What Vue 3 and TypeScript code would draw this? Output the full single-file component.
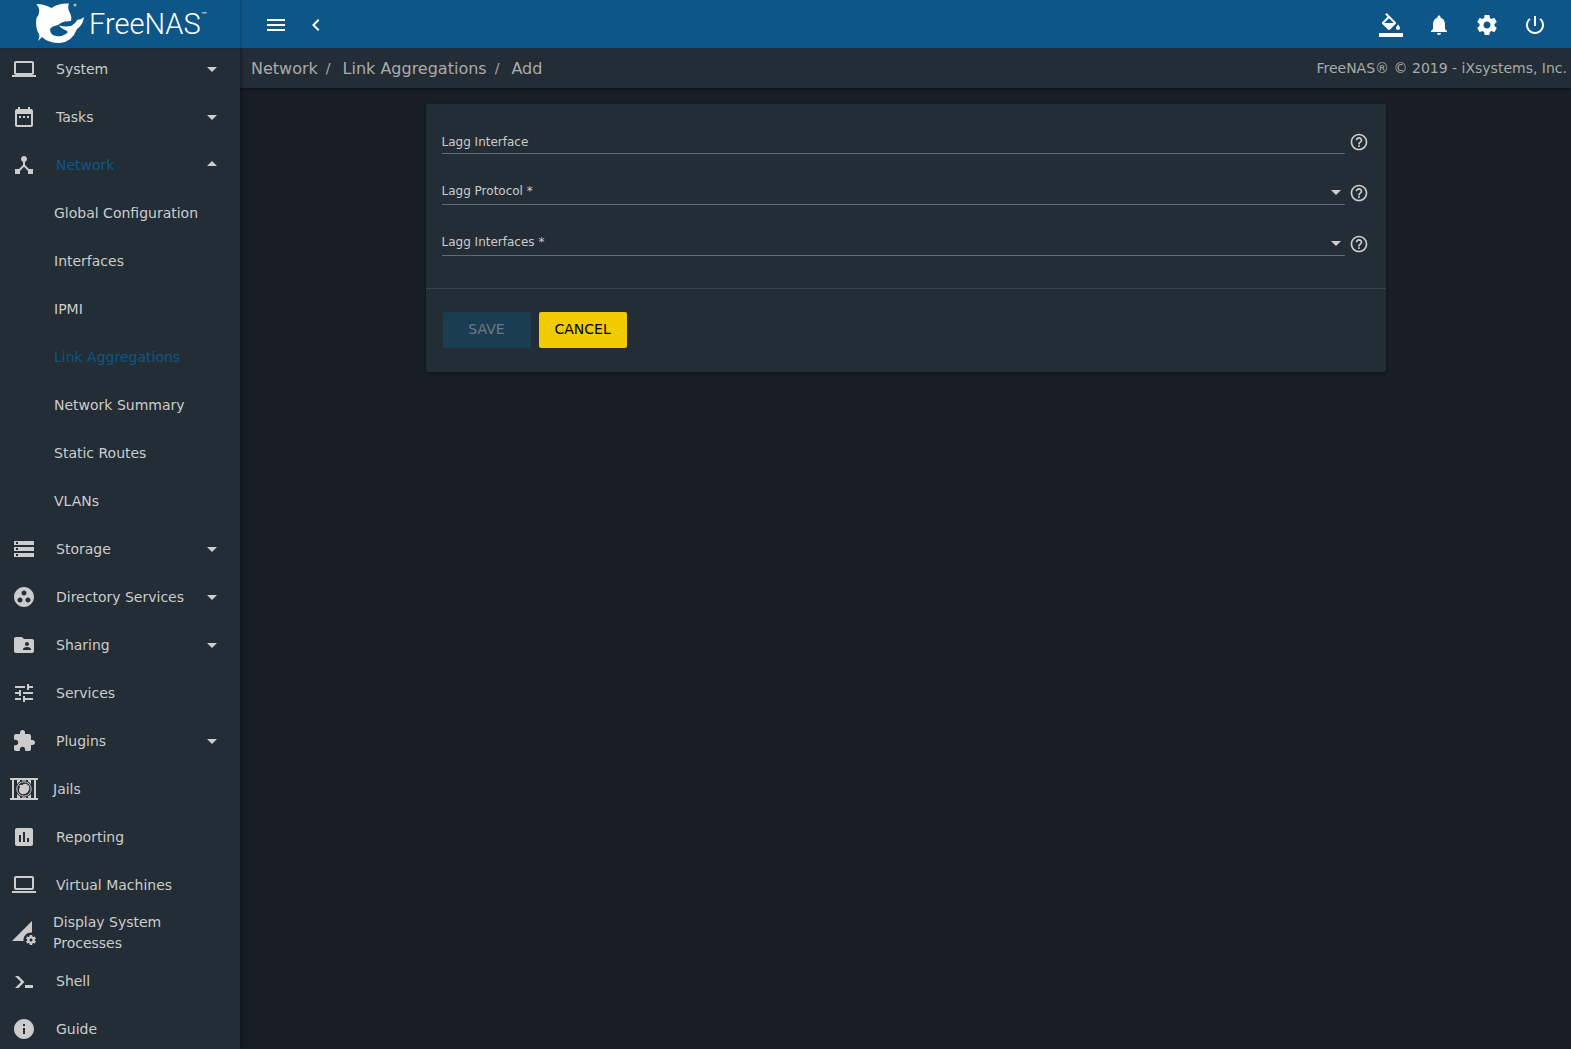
<script setup lang="ts">
interface NavItem {
  label: string
  icon: string
  arrow?: boolean
  open?: boolean
  custom?: boolean
}

const icons: Record<string, string> = {
  computer: 'M20 18c1.1 0 1.99-.9 1.99-2L22 6c0-1.1-.9-2-2-2H4c-1.1 0-2 .9-2 2v10c0 1.1.9 2 2 2H0v2h24v-2h-4zM4 6h16v10H4V6z',
  laptop: 'M20 17c1.1 0 2-.9 2-2V5c0-1.1-.9-2-2-2H4c-1.1 0-2 .9-2 2v10c0 1.1.9 2 2 2zM4 5h16v10H4zM0 18h24v2H0z',
  date: 'M9 11H7v2h2v-2zm4 0h-2v2h2v-2zm4 0h-2v2h2v-2zm2-7h-1V2h-2v2H8V2H6v2H5c-1.11 0-1.99.9-1.99 2L3 20c0 1.1.89 2 2 2h14c1.1 0 2-.9 2-2V6c0-1.1-.9-2-2-2zm0 16H5V9h14v11z',
  hub: 'M17 16l-4-4V8.82C14.16 8.4 15 7.3 15 6c0-1.66-1.34-3-3-3S9 4.34 9 6c0 1.3.84 2.4 2 2.82V12l-4 4H3v5h5v-3.05l4-4.2 4 4.2V21h5v-5h-4z',
  storage: 'M2 20h20v-4H2v4zm2-3h2v2H4v-2zM2 4v4h20V4H2zm4 3H4V5h2v2zm-4 7h20v-4H2v4zm2-3h2v2H4v-2z',
  group: 'M12 2C6.48 2 2 6.48 2 12s4.48 10 10 10 10-4.48 10-10S17.52 2 12 2zM8 17.5c-1.38 0-2.5-1.12-2.5-2.5s1.12-2.5 2.5-2.5 2.5 1.12 2.5 2.5-1.12 2.5-2.5 2.5zM9.5 8c0-1.38 1.12-2.5 2.5-2.5s2.5 1.12 2.5 2.5-1.12 2.5-2.5 2.5S9.5 9.38 9.5 8zm6.5 9.5c-1.38 0-2.5-1.12-2.5-2.5s1.12-2.5 2.5-2.5 2.5 1.12 2.5 2.5-1.12 2.5-2.5 2.5z',
  share: 'M20 6h-8l-2-2H4c-1.1 0-1.99.9-1.99 2L2 18c0 1.1.9 2 2 2h16c1.1 0 2-.9 2-2V8c0-1.1-.9-2-2-2zm-5 3c1.1 0 2 .9 2 2s-.9 2-2 2-2-.9-2-2 .9-2 2-2zm4 8h-8v-1c0-1.33 2.67-2 4-2s4 .67 4 2v1z',
  tune: 'M3 17v2h6v-2H3zM3 5v2h10V5H3zm10 16v-2h8v-2h-8v-2h-2v6h2zM7 9v2H3v2h4v2h2V9H7zm14 4v-2H11v2h10zm-6-4h2V7h4V5h-4V3h-2v6z',
  extension: 'M20.5 11H19V7c0-1.1-.9-2-2-2h-4V3.5C13 2.12 11.88 1 10.5 1S8 2.12 8 3.5V5H4c-1.1 0-1.99.9-1.99 2v3.8H3.5c1.49 0 2.7 1.21 2.7 2.7s-1.21 2.7-2.7 2.7H2V20c0 1.1.9 2 2 2h3.8v-1.5c0-1.49 1.21-2.7 2.7-2.7 1.49 0 2.7 1.21 2.7 2.7V22H17c1.1 0 2-.9 2-2v-4h1.5c1.38 0 2.5-1.12 2.5-2.5S21.88 11 20.5 11z',
  report: 'M19 3H5c-1.1 0-2 .9-2 2v14c0 1.1.9 2 2 2h14c1.1 0 2-.9 2-2V5c0-1.1-.9-2-2-2zM9 17H7v-7h2v7zm4 0h-2V7h2v10zm4 0h-2v-4h2v4z',
  process: 'M18.99 11.5c.34 0 .67.03 1 .07L20 0 0 20h11.56c-.04-.33-.07-.66-.07-1 0-4.14 3.36-7.5 7.5-7.5zm3.71 7.99c.02-.16.04-.32.04-.49 0-.17-.01-.33-.04-.49l1.06-.83c.09-.08.12-.21.06-.32l-1-1.73c-.06-.11-.19-.15-.31-.11l-1.24.5c-.26-.2-.54-.37-.85-.49l-.19-1.32c-.01-.12-.12-.21-.24-.21h-2c-.12 0-.23.09-.25.21l-.19 1.32c-.3.13-.59.29-.85.49l-1.24-.5c-.11-.04-.24 0-.31.11l-1 1.73c-.06.11-.04.24.06.32l1.06.83c-.02.16-.03.32-.03.49 0 .17.01.33.03.49l-1.06.83c-.09.08-.12.21-.06.32l1 1.73c.06.11.19.15.31.11l1.24-.5c.26.2.54.37.85.49l.19 1.32c.02.12.12.21.25.21h2c.12 0 .23-.09.25-.21l.19-1.32c.3-.13.59-.29.84-.49l1.25.5c.11.04.24 0 .31-.11l1-1.73c.06-.11.03-.24-.06-.32l-1.07-.83zm-3.71 1.01c-.83 0-1.5-.67-1.5-1.5s.67-1.5 1.5-1.5 1.5.67 1.5 1.5-.67 1.5-1.5 1.5z',
  shell: 'M3 7h3.500l6 6-6 6H3l6-6zM13 16h8v3h-8z',
  info: 'M12 2C6.48 2 2 6.48 2 12s4.48 10 10 10 10-4.48 10-10S17.52 2 12 2zm1 15h-2v-6h2v6zm0-8h-2V7h2v2z',
  menu: 'M3 18h18v-2H3v2zm0-5h18v-2H3v2zm0-7v2h18V6H3z',
  chevron: 'M15.41 7.41L14 6l-6 6 6 6 1.41-1.41L10.83 12z',
  fill: 'M16.56 8.94L7.62 0 6.21 1.41l2.38 2.38-5.15 5.15c-.59.59-.59 1.54 0 2.12l5.5 5.5c.29.29.68.44 1.06.44s.77-.15 1.06-.44l5.5-5.5c.59-.58.59-1.53 0-2.12zM5.21 10L10 5.21 14.79 10H5.21zM19 11.5s-2 2.17-2 3.5c0 1.1.9 2 2 2s2-.9 2-2c0-1.33-2-3.5-2-3.5zM0 20h24v4H0v-4z',
  bell: 'M12 22c1.1 0 2-.9 2-2h-4c0 1.1.89 2 2 2zm6-6v-5c0-3.07-1.64-5.64-4.5-6.32V4c0-.83-.67-1.5-1.5-1.5s-1.5.67-1.5 1.5v.68C7.63 5.36 6 7.92 6 11v5l-2 2v1h16v-1l-2-2z',
  settings: 'M19.43 12.98c.04-.32.07-.64.07-.98s-.03-.66-.07-.98l2.11-1.65c.19-.15.24-.42.12-.64l-2-3.46c-.12-.22-.39-.3-.61-.22l-2.49 1c-.52-.4-1.08-.73-1.69-.98l-.38-2.65C14.46 2.18 14.25 2 14 2h-4c-.25 0-.46.18-.49.42l-.38 2.65c-.61.25-1.17.59-1.69.98l-2.49-1c-.23-.09-.49 0-.61.22l-2 3.46c-.13.22-.07.49.12.64l2.11 1.65c-.04.32-.07.65-.07.98s.03.66.07.98l-2.11 1.65c-.19.15-.24.42-.12.64l2 3.46c.12.22.39.3.61.22l2.49-1c.52.4 1.08.73 1.69.98l.38 2.65c.03.24.24.42.49.42h4c.25 0 .46-.18.49-.42l.38-2.65c.61-.25 1.17-.59 1.69-.98l2.49 1c.23.09.49 0 .61-.22l2-3.46c.12-.22.07-.49-.12-.64l-2.11-1.65zM12 15.5c-1.93 0-3.5-1.57-3.5-3.5s1.57-3.5 3.5-3.5 3.5 1.57 3.5 3.5-1.57 3.5-3.5 3.5z',
  power: 'M13 3h-2v10h2V3zm4.83 2.17l-1.42 1.42C17.99 7.86 19 9.81 19 12c0 3.87-3.13 7-7 7s-7-3.13-7-7c0-2.19 1.01-4.14 2.58-5.42L6.17 5.17C4.23 6.82 3 9.26 3 12c0 4.97 4.03 9 9 9s9-4.03 9-9c0-2.74-1.23-5.18-3.17-6.83z',
  help: 'M11 18h2v-2h-2v2zm1-16C6.48 2 2 6.48 2 12s4.48 10 10 10 10-4.48 10-10S17.52 2 12 2zm0 18c-4.41 0-8-3.59-8-8s3.59-8 8-8 8 3.59 8 8-3.59 8-8 8zm0-14c-2.21 0-4 1.79-4 4h2c0-1.1.9-2 2-2s2 .9 2 2c0 2-3 1.75-3 5h2c0-2.25 3-2.5 3-5 0-2.21-1.79-4-4-4z',
  down: 'M7 10l5 5 5-5z',
  up: 'M7 13l5-5 5 5z',
}

const nav: NavItem[] = [
  { label: 'System', icon: 'computer', arrow: true },
  { label: 'Tasks', icon: 'date', arrow: true },
  { label: 'Network', icon: 'hub', arrow: true, open: true },
  { label: 'Storage', icon: 'storage', arrow: true },
  { label: 'Directory Services', icon: 'group', arrow: true },
  { label: 'Sharing', icon: 'share', arrow: true },
  { label: 'Services', icon: 'tune' },
  { label: 'Plugins', icon: 'extension', arrow: true },
  { label: 'Jails', icon: 'jail', custom: true },
  { label: 'Reporting', icon: 'report' },
  { label: 'Virtual Machines', icon: 'laptop' },
  { label: 'Display System Processes', icon: 'process', custom: true },
  { label: 'Shell', icon: 'shell' },
  { label: 'Guide', icon: 'info' },
]

const networkPages = [
  'Global Configuration',
  'Interfaces',
  'IPMI',
  'Link Aggregations',
  'Network Summary',
  'Static Routes',
  'VLANs',
]

const actions = [
  { icon: 'fill', label: 'Change theme' },
  { icon: 'bell', label: 'Notifications' },
  { icon: 'settings', label: 'Settings' },
  { icon: 'power', label: 'Power' },
]

const selects = [
  { id: 'protocol', label: 'Lagg Protocol' },
  { id: 'members', label: 'Lagg Interfaces' },
]
</script>

<template>
  <div class="app">
    <header class="topbar">
      <a class="brand" href="#" aria-label="FreeNAS home">
        <svg class="shark" viewBox="0 0 50 42" width="50" height="42" aria-hidden="true">
          <path
            d="M0.500 1Q8 1 15.500 5Q22 0 33 .5Q31 5 34 10Q36 14 35 18L29 18.500Q25 19 22 22Q16 23 14 26Q14 32 20 33Q28 34 32 29Q30 27 27 26Q24 24 23 22.500Q29 24 35 23Q40 20 41 17Q45 17 48 14Q47 22 41 26Q36 39 24 40Q12 40 6 34L2 38Q4 34 3 31Q-1 25 0.500 15Q6 8 0.500 1Z"
            fill="currentColor"
          />
          <circle cx="39" cy="2" r="1.500" fill="currentColor" opacity="0.6" />
        </svg>
        <span class="wordmark">FreeNAS</span><span class="tm">™</span>
      </a>
      <div class="tools">
        <button type="button" class="icon-btn" aria-label="Toggle menu">
          <svg class="icon" viewBox="0 0 24 24"><path :d="icons.menu" /></svg>
        </button>
        <button type="button" class="icon-btn" aria-label="Collapse menu">
          <svg class="icon" viewBox="0 0 24 24"><path :d="icons.chevron" /></svg>
        </button>
        <div class="actions">
          <button v-for="a in actions" :key="a.icon" type="button" class="icon-btn" :aria-label="a.label">
            <svg class="icon" viewBox="0 0 24 24"><path :d="icons[a.icon]" /></svg>
          </button>
        </div>
      </div>
    </header>

    <div class="body">
      <nav class="sidebar" aria-label="Main">
        <ul class="nav-list">
          <li v-for="item in nav" :key="item.label">
            <a class="nav-row" :class="{ custom: item.custom, active: item.open }" href="#">
              <svg v-if="item.icon === 'jail'" class="icon jail" viewBox="0 0 28 24">
                <path d="M0 1h28v2H0zM0 21h28v2H0zM2 3h2v18H2zM7 3h3v18H7zM12 3h4v18h-4zM18 3h3v18h-3zM24 3h2v18h-2z" />
                <circle cx="14" cy="12" r="8.500" class="jail-gap" />
                <circle cx="14" cy="12" r="7.200" class="jail-ring" />
                <path d="M9 8l3 0q3-2 5-1l1 2 1-1q1 4-1 7q-4 4-8 1q-2-3 0-6z" />
              </svg>
              <svg v-else class="icon" viewBox="0 0 24 24"><path :d="icons[item.icon]" /></svg>
              <span class="nav-label">{{ item.label }}</span>
              <svg v-if="item.arrow" class="icon" viewBox="0 0 24 24">
                <path :d="item.open ? icons.up : icons.down" />
              </svg>
            </a>
            <ul v-if="item.open" class="nav-list">
              <li v-for="page in networkPages" :key="page">
                <a class="sub-row" :class="{ active: page === 'Link Aggregations' }" href="#">
                  <span class="nav-label">{{ page }}</span>
                </a>
              </li>
            </ul>
          </li>
        </ul>
      </nav>

      <main class="main">
        <div class="crumb-bar">
          <nav class="crumbs" aria-label="Breadcrumb">
            <a href="#">Network</a><span class="slash">/</span>
            <a href="#">Link Aggregations</a><span class="slash">/</span>
            <a href="#">Add</a>
          </nav>
          <span class="copyright">FreeNAS® © 2019 - iXsystems, Inc.</span>
        </div>

        <form class="card" @submit.prevent>
          <div class="fields">
            <div class="field-row">
              <div class="field">
                <label for="interface">Lagg Interface</label>
                <input id="interface" type="text" />
              </div>
              <button type="button" class="help" aria-label="Help for Lagg Interface">
                <svg viewBox="0 0 24 24"><path :d="icons.help" /></svg>
              </button>
            </div>
            <div v-for="s in selects" :key="s.id" class="field-row select-row">
              <div class="field">
                <label :for="s.id">{{ s.label }} *</label>
                <select :id="s.id" required><option value=""></option></select>
                <svg class="icon caret" viewBox="0 0 24 24"><path :d="icons.down" /></svg>
              </div>
              <button type="button" class="help" :aria-label="'Help for ' + s.label">
                <svg viewBox="0 0 24 24"><path :d="icons.help" /></svg>
              </button>
            </div>
          </div>
          <div class="buttons">
            <button type="submit" class="btn save" disabled>SAVE</button>
            <button type="button" class="btn cancel">CANCEL</button>
          </div>
        </form>
      </main>
    </div>
  </div>
</template>

<style>
body {
  margin: 0;
  background: #171e26;
}
</style>

<style scoped>
.app {
  display: flex;
  flex-direction: column;
  height: 100vh;
  overflow: hidden;
  background: #171e26;
  color: #cccccc;
  font-family: "DejaVu Sans", sans-serif;
  font-size: 14px;
}
a {
  color: inherit;
  text-decoration: none;
}
button {
  font: inherit;
  border: 0;
  cursor: pointer;
}
.icon {
  width: 24px;
  height: 24px;
  flex: none;
  fill: currentColor;
}
.topbar {
  display: flex;
  flex: none;
  height: 48px;
  background: #0d5687;
  color: #ffffff;
  z-index: 2;
}
.brand {
  display: flex;
  align-items: center;
  flex: none;
  box-sizing: border-box;
  width: 240px;
  padding-left: 36px;
  box-shadow: 1px 0 2px rgba(0, 0, 0, 0.2);
}
.shark {
  flex: none;
}
.wordmark {
  margin-left: 3px;
  font-family: Roboto, sans-serif;
  font-size: 29px;
  font-weight: 300;
  line-height: 48px;
}
.tm {
  align-self: flex-start;
  margin-top: 9px;
  font-size: 7px;
  line-height: 12px;
}
.tools {
  display: flex;
  flex: 1;
  align-items: center;
  padding: 2px 24px 0;
  gap: 16px;
}
.icon-btn {
  display: flex;
  padding: 0;
  background: none;
  color: inherit;
}
.actions {
  display: flex;
  gap: 24px;
  margin-left: auto;
}
.body {
  display: flex;
  flex: 1;
  min-height: 0;
}
.sidebar {
  flex: none;
  width: 240px;
  overflow: hidden;
  background: #232d35;
  box-shadow: 1px 0 4px rgba(0, 0, 0, 0.4);
  z-index: 1;
}
.nav-list {
  margin: 0;
  padding: 0;
  list-style: none;
}
.sidebar > .nav-list {
  margin-top: -3px;
}
.nav-row {
  display: flex;
  align-items: center;
  gap: 20px;
  height: 48px;
  padding: 0 16px 0 12px;
  white-space: nowrap;
}
.nav-label {
  flex: 1;
  min-width: 0;
  line-height: 21px;
}
.custom {
  gap: 17px;
  padding-right: 48px;
  white-space: normal;
}
.jail {
  width: 28px;
  margin: 0 -2px;
}
.jail-gap {
  fill: #232d35;
}
.jail-ring {
  fill: none;
  stroke: #cccccc;
}
.sub-row {
  display: flex;
  align-items: center;
  height: 48px;
  padding-left: 54px;
}
.active .nav-label {
  color: #0d5687;
}
.main {
  flex: 1;
  min-width: 0;
}
.crumb-bar {
  display: flex;
  align-items: center;
  justify-content: space-between;
  height: 40px;
  padding: 0 4px 0 11px;
  background: #232d35;
  color: #aaaaaa;
  box-shadow: 0 1px 3px rgba(0, 0, 0, 0.5);
}
.crumbs {
  display: flex;
  align-items: center;
  font-size: 16px;
}
.slash {
  margin: 0 12px 0 8px;
  font-size: 14px;
}
.card {
  max-width: 960px;
  margin: 16px auto;
  border-radius: 2px;
  background: #232d35;
  box-shadow: 0 1px 3px rgba(0, 0, 0, 0.5);
}
.fields {
  display: flex;
  flex-direction: column;
  gap: 16px;
  padding: 16px 17px 32px 16px;
}
.field-row {
  display: flex;
  align-items: flex-end;
  gap: 4px;
}
.field {
  display: grid;
  flex: 1;
  height: 34px;
  align-items: end;
  box-sizing: border-box;
  border-bottom: 1px solid #636a70;
  font-size: 12px;
}
.field > * {
  grid-area: 1 / 1;
}
.field label {
  line-height: 16px;
  padding-bottom: 3px;
  pointer-events: none;
}
.field input,
.field select {
  box-sizing: border-box;
  width: 100%;
  height: 24px;
  padding: 0;
  border: 0;
  outline: 0;
  appearance: none;
  background: none;
  color: inherit;
  font: inherit;
}
.select-row .field {
  height: 35px;
}
.select-row label {
  padding-bottom: 5px;
}
.caret {
  justify-self: end;
  margin-right: -3px;
  pointer-events: none;
}
.help {
  display: flex;
  margin-bottom: 2px;
  padding: 0;
  background: none;
  color: inherit;
}
.help svg {
  width: 20px;
  height: 20px;
  fill: currentColor;
}
.buttons {
  display: flex;
  gap: 8px;
  padding: 23px 17px 24px;
  border-top: 1px solid #38424a;
}
.btn {
  min-width: 88px;
  height: 36px;
  padding: 0 16px 2px;
  border-radius: 2px;
}
.save {
  background: #1b3d54;
  color: #6f7981;
}
.cancel {
  background: #f0cb00;
  color: #000000;
}
</style>
